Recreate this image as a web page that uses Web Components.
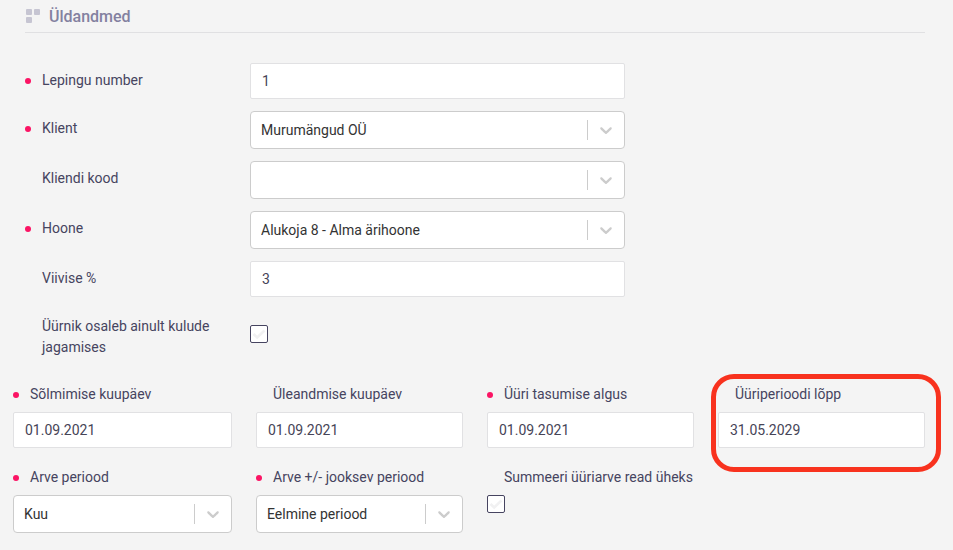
<!DOCTYPE html>
<html lang="et">
<head>
  <meta charset="UTF-8">
  <meta name="viewport" content="width=device-width, initial-scale=1.0">
  <title>Üldandmed</title>
  <style>
    body {
      margin: 0;
      background: #f4f4f4;
      color: #464460;
      font-family: Roboto, "Liberation Sans", sans-serif;
      font-size: 14px;
      line-height: 21px;
    }
  </style>
</head>
<body>
  <contract-form>
    <section-title slot="title">Üldandmed</section-title>

    <text-field name="number" value="1" required>Lepingu number</text-field>
    <select-field name="client" value="Murumängud OÜ" required>Klient</select-field>
    <select-field name="client-code" value="">Kliendi kood</select-field>
    <select-field name="building" value="Alukoja 8 - Alma ärihoone" required>Hoone</select-field>
    <text-field name="interest" value="3">Viivise %</text-field>
    <check-field name="share-only">Üürnik osaleb ainult kulude jagamises</check-field>

    <text-field slot="period" stacked name="signed" value="01.09.2021" required>Sõlmimise kuupäev</text-field>
    <text-field slot="period" stacked name="handover" value="01.09.2021">Üleandmise kuupäev</text-field>
    <text-field slot="period" stacked name="rent-start" value="01.09.2021" required>Üüri tasumise algus</text-field>
    <highlight-frame slot="period">
      <text-field stacked name="rent-end" value="31.05.2029">Üüriperioodi lõpp</text-field>
    </highlight-frame>
    <select-field slot="period" stacked name="invoice-period" value="Kuu" required>Arve periood</select-field>
    <select-field slot="period" stacked name="invoice-offset" value="Eelmine periood" required>Arve +/- jooksev periood</select-field>
    <check-field slot="period" stacked name="sum-rows">Summeeri üüriarve read üheks</check-field>
  </contract-form>

  <script>
    class ContractForm extends HTMLElement {
      constructor() {
        super();
        this.attachShadow({ mode: "open" });
      }

      connectedCallback() {
        this.shadowRoot.innerHTML = `
          <style>
            :host {
              display: block;
              padding: 0 16px 16px 13px;
            }
            .main {
              padding: 0 12px;
            }
            .rows {
              display: flex;
              flex-direction: column;
              gap: 12px;
              padding-top: 30px;
            }
            .periods {
              display: grid;
              grid-template-columns: repeat(4, minmax(0, 1fr));
              row-gap: 19px;
              padding-top: 26px;
            }
            .periods ::slotted(*) {
              margin: 0 12px;
            }
            /* first column sits flush with the form edge */
            .periods ::slotted([name="signed"]),
            .periods ::slotted([name="invoice-period"]) {
              margin-left: 0;
            }
          </style>
          <form>
            <div class="main">
              <slot name="title"></slot>
              <div class="rows"><slot></slot></div>
            </div>
            <div class="periods"><slot name="period"></slot></div>
          </form>
        `;
      }
    }

    class SectionTitle extends HTMLElement {
      constructor() {
        super();
        this.attachShadow({ mode: "open" });
      }

      connectedCallback() {
        this.shadowRoot.innerHTML = `
          <style>
            :host {
              display: block;
              border-bottom: 1px solid #e0e0e2;
            }
            h2 {
              display: flex;
              align-items: center;
              gap: 8px;
              margin: 0;
              height: 32px;
              color: #8381a0;
              font-size: 16px;
              font-weight: 500;
            }
            svg {
              margin-left: 1px;
            }
          </style>
          <h2>
            <svg width="15" height="14" viewBox="0 0 15 14" fill="#c6c5d2" aria-hidden="true">
              <rect x="0" y="0" width="6" height="6" rx="1"/>
              <rect x="8" y="0" width="6" height="6" rx="1"/>
              <rect x="0" y="8" width="6" height="6" rx="1"/>
            </svg>
            <slot></slot>
          </h2>
        `;
      }
    }

    // label + control layout shared by all fields
    const fieldStyles = `
      :host {
        display: grid;
        grid-template-columns: 3fr 5fr 4fr;
        align-items: start;
      }
      :host([stacked]) {
        grid-template-columns: minmax(0, 1fr);
        row-gap: 7px;
        align-content: start;
      }
      label {
        display: flex;
        gap: 11px;
        padding: 7px 36px 0 0;
      }
      :host([stacked]) label {
        padding: 0;
        white-space: nowrap;
      }
      label::before {
        content: "";
        flex: none;
        width: 6px;
        height: 6px;
        margin-top: 8px;
        border-radius: 50%;
      }
      :host([required]) label::before {
        background: #fb1464;
      }
      input, select {
        box-sizing: border-box;
        margin: 0;
        font: inherit;
        outline: none;
      }
    `;

    class TextField extends HTMLElement {
      constructor() {
        super();
        this.attachShadow({ mode: "open" });
      }

      connectedCallback() {
        this.shadowRoot.innerHTML = `
          <style>
            ${fieldStyles}
            input {
              width: 100%;
              height: 36px;
              padding: 0 11px;
              border: 1px solid #e1e1e3;
              border-radius: 2px;
              background: #fff;
              color: #464457;
            }
            input:focus {
              border-color: #9a98b8;
            }
          </style>
          <label for="control"><span><slot></slot></span></label>
          <input id="control" type="text" name="${this.getAttribute("name")}" value="${this.getAttribute("value") || ""}">
        `;
      }
    }

    class SelectField extends HTMLElement {
      constructor() {
        super();
        this.attachShadow({ mode: "open" });
      }

      connectedCallback() {
        const value = this.getAttribute("value") || "";
        this.shadowRoot.innerHTML = `
          <style>
            ${fieldStyles}
            .box {
              display: grid;
              align-items: center;
            }
            select, .indicator {
              grid-area: 1 / 1;
            }
            select {
              appearance: none;
              width: 100%;
              height: 38px;
              padding: 0 46px 0 10px;
              border: 1px solid #ccc;
              border-radius: 4px;
              background: #fff;
              color: #333;
            }
            select:focus {
              border-color: #9a98b8;
            }
            .indicator {
              display: flex;
              justify-self: end;
              margin-right: 1px;
              padding: 0 8px;
              border-left: 1px solid #ccc;
              pointer-events: none;
            }
          </style>
          <label for="control"><span><slot></slot></span></label>
          <div class="box">
            <select id="control" name="${this.getAttribute("name")}">
              <option>${value}</option>
            </select>
            <span class="indicator">
              <svg width="20" height="20" viewBox="0 0 20 20" fill="#ccc" aria-hidden="true">
                <path d="M4.516 7.548c0.436-0.446 1.043-0.481 1.576 0l3.908 3.747 3.908-3.747c0.533-0.481 1.141-0.446 1.574 0 0.436 0.445 0.408 1.197 0 1.615-0.406 0.418-4.695 4.502-4.695 4.502-0.217 0.223-0.502 0.335-0.787 0.335s-0.57-0.112-0.789-0.335c0 0-4.287-4.084-4.695-4.502s-0.436-1.17 0-1.615z"/>
              </svg>
            </span>
          </div>
        `;
      }
    }

    class CheckField extends HTMLElement {
      constructor() {
        super();
        this.attachShadow({ mode: "open" });
      }

      connectedCallback() {
        this.shadowRoot.innerHTML = `
          <style>
            ${fieldStyles}
            .box {
              display: grid;
              justify-content: start;
              align-items: center;
              justify-items: center;
              padding-top: 16px;
            }
            :host([stacked]) .box {
              padding-top: 0;
            }
            input, svg {
              grid-area: 1 / 1;
            }
            input {
              appearance: none;
              width: 18px;
              height: 18px;
              border: 1px solid #464460;
              border-radius: 2px;
              background: #fff;
            }
            svg {
              color: #f1f1f2;
              pointer-events: none;
            }
            input:checked + svg {
              color: #464460;
            }
          </style>
          <label for="control"><span><slot></slot></span></label>
          <div class="box">
            <input id="control" type="checkbox" name="${this.getAttribute("name")}">
            <svg width="14" height="14" viewBox="0 0 14 14" fill="none" stroke="currentColor" stroke-width="2.6" aria-hidden="true">
              <path d="M1.5 7L5.2 10.5L12.5 3.5"/>
            </svg>
          </div>
        `;
      }
    }

    class HighlightFrame extends HTMLElement {
      constructor() {
        super();
        this.attachShadow({ mode: "open" });
      }

      connectedCallback() {
        this.shadowRoot.innerHTML = `
          <style>
            :host {
              display: block;
              position: relative;
            }
            .frame {
              position: absolute;
              inset: -10px -16px -24px -7px;
              border: 5px solid #f8321e;
              border-radius: 23px;
              pointer-events: none;
            }
          </style>
          <slot></slot>
          <div class="frame"></div>
        `;
      }
    }

    customElements.define("contract-form", ContractForm);
    customElements.define("section-title", SectionTitle);
    customElements.define("text-field", TextField);
    customElements.define("select-field", SelectField);
    customElements.define("check-field", CheckField);
    customElements.define("highlight-frame", HighlightFrame);
  </script>
</body>
</html>
